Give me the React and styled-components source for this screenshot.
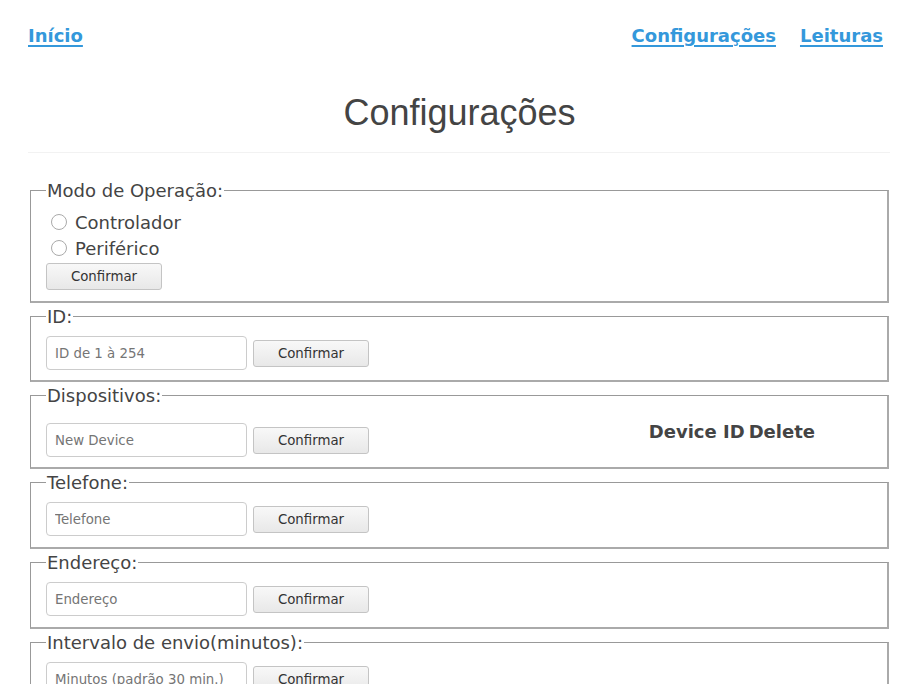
import React from 'react'
import styled, { createGlobalStyle } from 'styled-components'

const GlobalStyle = createGlobalStyle`
    body {
        margin: 0;
        background: #ffffff;
        font-family: "DejaVu Sans", "Noto Sans", sans-serif;
        color: #444444;
    }
`

const Page = styled.div`
    padding: 0 26px 24px 28px;
`

const Nav = styled.nav`
    display: flex;
    justify-content: space-between;
    align-items: center;
    padding: 25px 8px 0 0;
`

const NavGroup = styled.div`
    display: flex;
    gap: 24px;
`

const NavLink = styled.a`
    font-size: 18px;
    line-height: 22px;
    font-weight: bold;
    color: #3498db;
    text-decoration: underline;
    text-underline-offset: 3px;
    text-decoration-thickness: 2px;
    cursor: pointer;
`

const Title = styled.h1`
    font-family: "Liberation Sans", Arial, sans-serif;
    font-size: 36px;
    line-height: 42px;
    font-weight: normal;
    color: #444444;
    text-align: center;
    margin: 45px 0 18px;
`

const Rule = styled.hr`
    border: none;
    border-top: 1px solid #f2f2f2;
    margin: 0 1px 27px 0;
`

const Fieldset = styled.fieldset`
    margin: 0 2px 3px;
    padding: 8px 15px ${({ tight }) => (tight ? 10 : 11)}px;
    border-width: 1px 2px 2px 1px;
    border-color: #999999 #aaaaaa #aaaaaa #999999;
    border-style: solid;
    font-size: 18px;
    color: #444444;
`

const Legend = styled.legend`
    padding: 0 1px;
    line-height: 21px;
`

const RadioRow = styled.label`
    display: flex;
    align-items: center;
    gap: 8px;
    height: 26px;
    padding-left: 5px;
`

const Radio = styled.input`
    width: 16px;
    height: 16px;
    margin: 0;
    appearance: none;
    border: 1px solid #aaaaaa;
    border-radius: 50%;
    background: #ffffff;
`

const Row = styled.div`
    display: flex;
    align-items: flex-start;
    justify-content: space-between;
`

const FormGroup = styled.div`
    display: flex;
    align-items: center;
    gap: 6px;
    margin-top: ${({ offset }) => offset || 0}px;
`

const TextInput = styled.input`
    box-sizing: border-box;
    width: 201px;
    height: 34px;
    padding: 0 8px;
    border: 1px solid #cccccc;
    border-radius: 4px;
    font-family: "DejaVu Sans", sans-serif;
    font-size: 13.333px;
    color: #333333;
    &::placeholder {
        color: #757575;
    }
`

const Button = styled.button`
    box-sizing: border-box;
    width: 116px;
    height: 27px;
    margin-top: ${({ top }) => top || 0}px;
    border: 1px solid #c4c4c4;
    border-radius: 3px;
    background: linear-gradient(#f8f8f8, #e8e8e8);
    font-family: "DejaVu Sans", sans-serif;
    font-size: 13.333px;
    color: #333333;
    cursor: pointer;
`

const DeviceTable = styled.table`
    margin: 8px 54px 0 0;
    border-spacing: 2px 0;
    font-size: 18px;
    line-height: 20px;
    color: #444444;

    th {
        padding: 0 1px;
    }
`

const fields = [
    { label: 'ID:', placeholder: 'ID de 1 à 254', tight: true },
    { label: 'Dispositivos:', placeholder: 'New Device', table: true, tight: true },
    { label: 'Telefone:', placeholder: 'Telefone' },
    { label: 'Endereço:', placeholder: 'Endereço' },
    { label: 'Intervalo de envio(minutos):', placeholder: 'Minutos (padrão 30 min.)' },
]

export default function App() {
    return (
        <Page>
            <GlobalStyle />
            <Nav>
                <NavLink>Início</NavLink>
                <NavGroup>
                    <NavLink>Configurações</NavLink>
                    <NavLink>Leituras</NavLink>
                </NavGroup>
            </Nav>
            <Title>Configurações</Title>
            <Rule />
            <Fieldset>
                <Legend>Modo de Operação:</Legend>
                <RadioRow><Radio type="radio" name="modo" />Controlador</RadioRow>
                <RadioRow><Radio type="radio" name="modo" />Periférico</RadioRow>
                <Button top={2}>Confirmar</Button>
            </Fieldset>
            {fields.map(field => (
                <Fieldset key={field.label} tight={field.tight}>
                    <Legend>{field.label}</Legend>
                    <Row>
                        <FormGroup offset={field.table ? 9 : 1}>
                            <TextInput placeholder={field.placeholder} />
                            <Button>Confirmar</Button>
                        </FormGroup>
                        {field.table && (
                            <DeviceTable>
                                <thead>
                                    <tr>
                                        <th>Device ID</th>
                                        <th>Delete</th>
                                    </tr>
                                </thead>
                            </DeviceTable>
                        )}
                    </Row>
                </Fieldset>
            ))}
        </Page>
    )
}
